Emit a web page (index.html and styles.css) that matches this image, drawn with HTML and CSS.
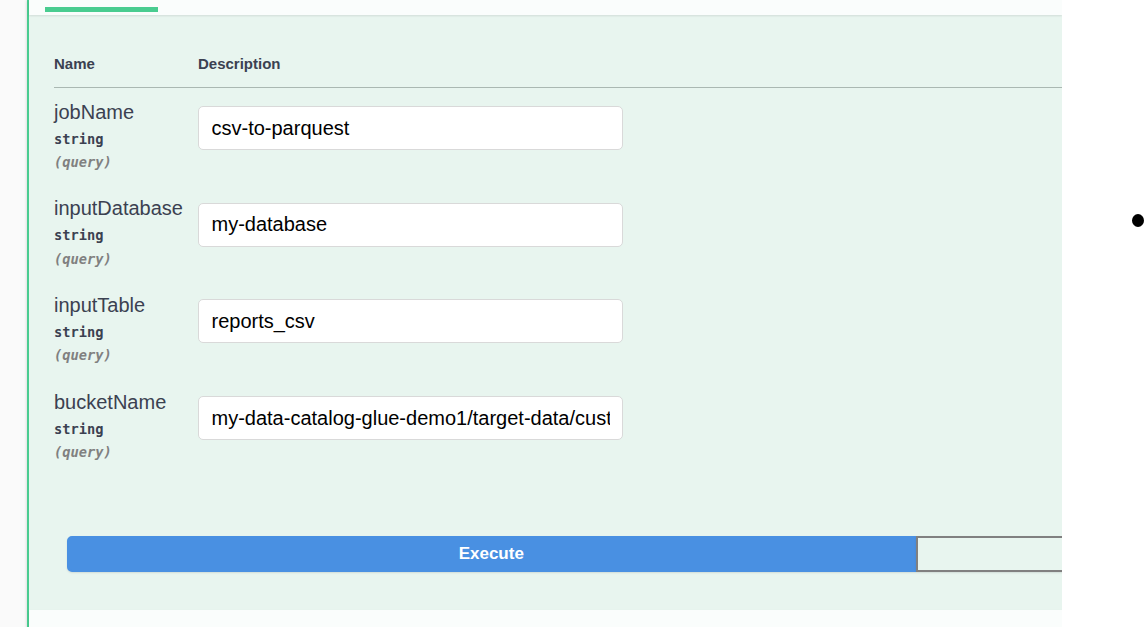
FILE: index.html
```html
<!DOCTYPE html>
<html lang="en">
<head>
<meta charset="utf-8">
<title>Parameters</title>
<link rel="stylesheet" href="styles.css">
</head>
<body>
<div class="stage">
  <div class="opblock">
    <div class="tab-header"><div class="tab-line"></div></div>
    <div class="params">
      <div class="thead">
        <div class="col-name">Name</div>
        <div class="col-desc">Description</div>
      </div>
      <div class="row">
        <div class="col-name">
          <div class="p-name">jobName</div>
          <div class="p-type">string</div>
          <div class="p-in">(query)</div>
        </div>
        <div class="col-desc"><input class="field" type="text" value="csv-to-parquest"></div>
      </div>
      <div class="row">
        <div class="col-name">
          <div class="p-name">inputDatabase</div>
          <div class="p-type">string</div>
          <div class="p-in">(query)</div>
        </div>
        <div class="col-desc"><input class="field" type="text" value="my-database"></div>
      </div>
      <div class="row">
        <div class="col-name">
          <div class="p-name">inputTable</div>
          <div class="p-type">string</div>
          <div class="p-in">(query)</div>
        </div>
        <div class="col-desc"><input class="field" type="text" value="reports_csv"></div>
      </div>
      <div class="row">
        <div class="col-name">
          <div class="p-name">bucketName</div>
          <div class="p-type">string</div>
          <div class="p-in">(query)</div>
        </div>
        <div class="col-desc"><input class="field" type="text" value="my-data-catalog-glue-demo1/target-data/customers"></div>
      </div>
    </div>
    <div class="btn-group">
      <button class="btn execute" type="button">Execute</button>
      <button class="btn clear" type="button" aria-label="Clear"></button>
    </div>
    <div class="responses-header"></div>
  </div>
</div>
<div class="bullet"></div>
</body>
</html>
```
FILE: styles.css
```css
html, body {
  margin: 0;
  padding: 0;
  background: #ffffff;
  font-family: "Liberation Sans", Arial, sans-serif;
  color: #3b4151;
}

.stage {
  width: 1062px;
  height: 627px;
  overflow: hidden;
  background: #fafafa;
  padding-left: 27px;
  box-sizing: border-box;
}

.opblock {
  border-left: 2px solid #49cc90;
  background: #e8f5ef;
  box-shadow: 0 0 3px rgba(0, 0, 0, 0.19);
  min-height: 700px;
}

.tab-header {
  height: 15px;
  padding-top: 7px;
  box-sizing: border-box;
  background: #fafdfc;
  box-shadow: 0 1px 2px rgba(0, 0, 0, 0.1);
  position: relative;
  z-index: 1;
}

.tab-line {
  margin-left: 16px;
  width: 113px;
  height: 5px;
  background: #49cc90;
}

.params {
  padding-left: 25px;
  padding-top: 1px;
}

.thead {
  display: flex;
  margin-top: 39px;
  padding-bottom: 15px;
  border-bottom: 1px solid #aab8b2;
  font-size: 15px;
  font-weight: 700;
  line-height: 17px;
}

.col-name {
  width: 144px;
  flex: none;
}

.col-desc {
  flex: 1;
}

.row {
  display: flex;
  padding: 12.5px 0;
}

.p-name {
  font-size: 20px;
  line-height: 23px;
  white-space: nowrap;
}

.p-type {
  font-family: "DejaVu Sans Mono", "Liberation Mono", monospace;
  font-size: 13.7px;
  font-weight: 700;
  line-height: 18px;
  padding-top: 6px;
  padding-bottom: 5.5px;
}

.p-in {
  font-family: "DejaVu Sans Mono", "Liberation Mono", monospace;
  font-size: 13.7px;
  font-style: italic;
  font-weight: 600;
  color: #808080;
  line-height: 18px;
  padding-bottom: 1.2px;
}

.field {
  display: block;
  box-sizing: border-box;
  width: 425px;
  height: 44px;
  margin: 5.5px 0 0 0;
  padding: 0 12.5px;
  border: 1px solid #d9d9d9;
  border-radius: 5px;
  background: #ffffff;
  font-family: "Liberation Sans", Arial, sans-serif;
  font-size: 20px;
  color: #000000;
  outline: none;
}

.btn-group {
  display: flex;
  padding: 0 37.5px;
  margin-top: 61.3px;
  padding-bottom: 37.5px;
}

.btn {
  flex: none;
  width: 849.5px;
  height: 36px;
  box-sizing: border-box;
  padding: 0;
  font-family: "Liberation Sans", Arial, sans-serif;
  font-size: 17px;
  font-weight: 700;
  box-shadow: 0 1px 2px rgba(0, 0, 0, 0.1);
  cursor: pointer;
}

.execute {
  background: #4990e2;
  border: 2px solid #4990e2;
  color: #ffffff;
  border-radius: 5px 0 0 5px;
}

.clear {
  background: transparent;
  border: 2px solid #808080;
  color: #3b4151;
  border-radius: 0 5px 5px 0;
}

.responses-header {
  height: 40px;
  background: #fafdfc;
  box-shadow: 0 1px 2px rgba(0, 0, 0, 0.1);
}

.bullet {
  position: absolute;
  left: 1132px;
  top: 214px;
  width: 12px;
  height: 13px;
  border-radius: 50%;
  background: #000000;
}
```
